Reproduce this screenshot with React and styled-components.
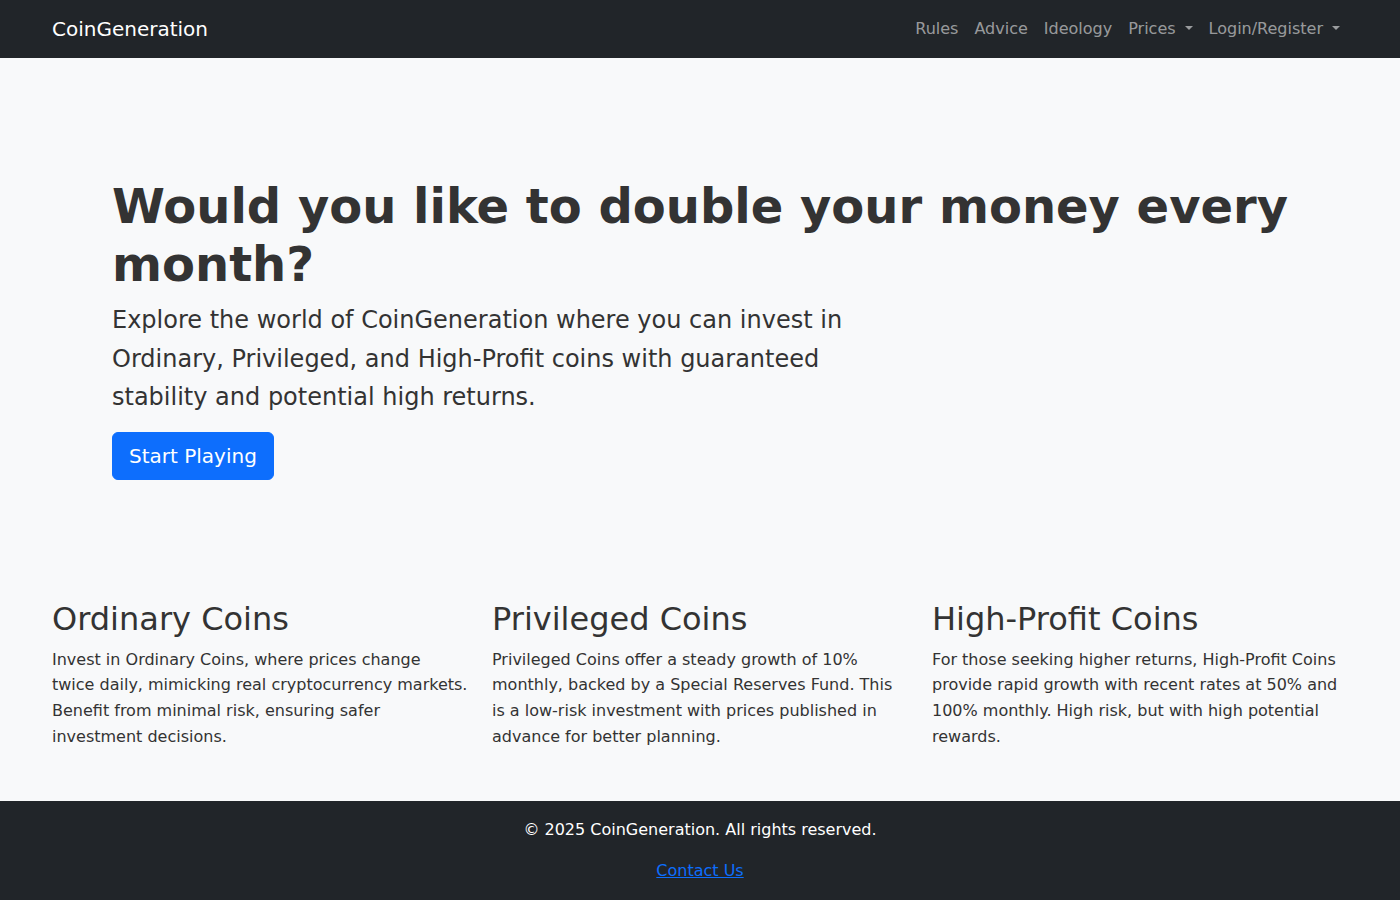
import React from "react";
import styled, { createGlobalStyle } from "styled-components";

const GlobalStyle = createGlobalStyle`
  * { box-sizing: border-box; }
  body {
    margin: 0;
    font-family: "DejaVu Sans", "Noto Sans", sans-serif;
    font-size: 16px;
    line-height: 1.6;
    color: #212529;
    background: #f8f9fa;
  }
`;

const Page = styled.div`
  min-height: 900px;
  display: flex;
  flex-direction: column;
`;

const Navbar = styled.nav`
  background: #212529;
  height: 58px;
`;

const Container = styled.div`
  max-width: 1320px;
  margin: 0 auto;
  padding: 0 12px;
`;

const NavInner = styled(Container)`
  height: 100%;
  display: flex;
  align-items: center;
  justify-content: space-between;
`;

const Brand = styled.a`
  color: #fff;
  font-size: 20px;
  text-decoration: none;
`;

const NavList = styled.ul`
  display: flex;
  list-style: none;
  margin: 0;
  padding: 0;
`;

const NavLink = styled.a`
  display: block;
  padding: 8px;
  color: rgba(255, 255, 255, 0.55);
  text-decoration: none;
  line-height: 24px;

  ${({ $dropdown }) =>
    $dropdown &&
    `
    &::after {
      content: "";
      display: inline-block;
      margin-left: 9px;
      vertical-align: 4px;
      border-top: 4px solid;
      border-right: 4px solid transparent;
      border-left: 4px solid transparent;
    }
  `}
`;

const Main = styled.main`
  flex: 1;
`;

const Hero = styled.section`
  padding: 120px 60px 120px;
`;

const HeroTitle = styled.h1`
  margin: 0 0 8px;
  font-size: 48px;
  font-weight: 700;
  line-height: 1.2;
  color: #333;
`;

const Lead = styled.p`
  margin: 0 0 16px;
  max-width: 780px;
  font-size: 24px;
  line-height: 1.6;
  color: #333;
`;

const Button = styled.a`
  display: inline-block;
  padding: 8px 16px;
  font-size: 20px;
  line-height: 30px;
  color: #fff;
  background: #0d6efd;
  border: 1px solid #0d6efd;
  border-radius: 6px;
  text-decoration: none;
`;

const Features = styled.div`
  max-width: 1320px;
  margin: 0 auto;
  display: grid;
  grid-template-columns: repeat(3, 1fr);
  padding-bottom: 40px;
`;

const Feature = styled.div`
  padding: 0 12px;
`;

const FeatureTitle = styled.h2`
  margin: 0 0 8px;
  font-size: 32px;
  font-weight: 500;
  line-height: 1.2;
  color: #333;
`;

const FeatureText = styled.p`
  margin: 0;
  color: #333;
`;

const Footer = styled.footer`
  background: #212529;
  color: #fff;
  text-align: center;
  padding: 16px 0;
`;

const FooterLine = styled.p`
  margin: 0 0 16px;
  &:last-child { margin: 0; }
`;

const FooterLink = styled.a`
  color: #0d6efd;
`;

const features = [
  {
    title: "Ordinary Coins",
    text: "Invest in Ordinary Coins, where prices change twice daily, mimicking real cryptocurrency markets. Benefit from minimal risk, ensuring safer investment decisions.",
  },
  {
    title: "Privileged Coins",
    text: "Privileged Coins offer a steady growth of 10% monthly, backed by a Special Reserves Fund. This is a low-risk investment with prices published in advance for better planning.",
  },
  {
    title: "High-Profit Coins",
    text: "For those seeking higher returns, High-Profit Coins provide rapid growth with recent rates at 50% and 100% monthly. High risk, but with high potential rewards.",
  },
];

export default function App() {
  return (
    <Page>
      <GlobalStyle />
      <Navbar>
        <NavInner>
          <Brand href="#">CoinGeneration</Brand>
          <NavList>
            <li><NavLink href="#">Rules</NavLink></li>
            <li><NavLink href="#">Advice</NavLink></li>
            <li><NavLink href="#">Ideology</NavLink></li>
            <li><NavLink href="#" $dropdown>Prices</NavLink></li>
            <li><NavLink href="#" $dropdown>Login/Register</NavLink></li>
          </NavList>
        </NavInner>
      </Navbar>
      <Main>
        <Container>
          <Hero>
            <HeroTitle>Would you like to double your money every month?</HeroTitle>
            <Lead>
              Explore the world of CoinGeneration where you can invest in Ordinary,
              Privileged, and High-Profit coins with guaranteed stability and
              potential high returns.
            </Lead>
            <Button href="#">Start Playing</Button>
          </Hero>
        </Container>
        <Features>
          {features.map((f) => (
            <Feature key={f.title}>
              <FeatureTitle>{f.title}</FeatureTitle>
              <FeatureText>{f.text}</FeatureText>
            </Feature>
          ))}
        </Features>
      </Main>
      <Footer>
        <FooterLine>© 2025 CoinGeneration. All rights reserved.</FooterLine>
        <FooterLine>
          <FooterLink href="#">Contact Us</FooterLink>
        </FooterLine>
      </Footer>
    </Page>
  );
}
